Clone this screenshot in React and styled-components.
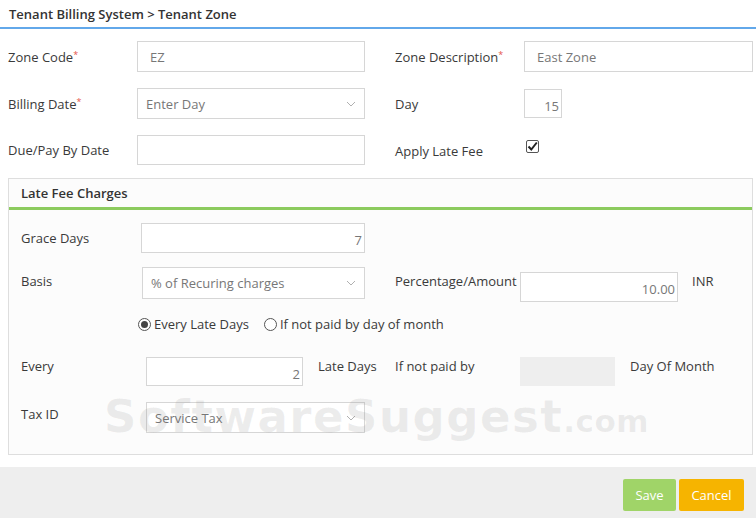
import React from "react";
import styled, { createGlobalStyle } from "styled-components";

const GlobalStyle = createGlobalStyle`
  body {
    margin: 0;
    background: #ffffff;
    font-family: "Open Sans", "Liberation Sans", sans-serif;
    font-size: 13px;
    color: #3a3a3a;
  }
`;

const Page = styled.div`
  position: relative;
  width: 756px;
  height: 518px;
  overflow: hidden;
  display: flex;
  flex-direction: column;
`;

const Header = styled.div`
  height: 27px;
  padding-left: 9px;
  display: flex;
  align-items: center;
  font-weight: 600;
  font-size: 13px;
  color: #333;
  border-bottom: 2px solid #62a8ea;
  box-sizing: content-box;
`;

const Form = styled.div`
  padding: 12px 3px 0 8px;
  display: flex;
  flex-direction: column;
  gap: 16px;
`;

const Row = styled.div`
  display: flex;
  align-items: ${(p) => (p.top ? "flex-start" : "center")};
  min-height: ${(p) => p.h || 31}px;
  margin-top: ${(p) => p.mt || 0}px;
`;

const Half = styled.div`
  display: flex;
  align-items: ${(p) => (p.top ? "flex-start" : "center")};
  width: ${(p) => p.w}px;
  margin-left: ${(p) => p.ml || 0}px;
  flex: ${(p) => (p.grow ? 1 : "none")};
`;

const Label = styled.div`
  width: ${(p) => p.w || 129}px;
  flex: none;
  color: #3a3a3a;
  padding-top: ${(p) => p.pt || 0}px;
  line-height: 18px;
  white-space: nowrap;
`;

const Req = styled.sup`
  color: #e5534b;
  font-size: 9px;
  vertical-align: top;
  position: relative;
  top: -2px;
`;

const Input = styled.div`
  box-sizing: border-box;
  height: ${(p) => p.h || 31}px;
  width: ${(p) => (p.w ? `${p.w}px` : "auto")};
  flex: ${(p) => (p.w ? "none" : 1)};
  margin-top: ${(p) => p.mt || 0}px;
  border: 1px solid #d6d6d6;
  background: ${(p) => (p.disabled ? "#eeeeee" : "#ffffff")};
  border-color: ${(p) => (p.disabled ? "#eeeeee" : "#d6d6d6")};
  color: #777;
  display: flex;
  align-items: center;
  justify-content: ${(p) => (p.right ? "flex-end" : "flex-start")};
  padding: ${(p) => (p.right ? "4px 2px 0 0" : "0 0 0 12px")};
`;

const Select = styled.div`
  box-sizing: border-box;
  height: ${(p) => p.h || 31}px;
  flex: 1;
  border: 1px solid #d6d6d6;
  background: #fff;
  color: #777;
  display: flex;
  align-items: center;
  justify-content: space-between;
  padding: 0 8px 0 8px;
`;

const Chevron = () => (
  <svg width="10" height="6" viewBox="0 0 10 6">
    <polyline points="1,1 5,5 9,1" fill="none" stroke="#b0b0b0" strokeWidth="1" />
  </svg>
);

const CheckBox = styled.span`
  width: 13px;
  height: 13px;
  box-sizing: border-box;
  border: 1px solid #555;
  border-radius: 2px;
  background: #fff;
  display: inline-flex;
  align-items: center;
  justify-content: center;
  margin: -7px 0 0 2px;
`;

const Panel = styled.div`
  margin: 13px 3px 0 8px;
  border: 1px solid #dedede;
  background: #fcfcfc;
  height: 277px;
  box-sizing: border-box;
`;

const PanelTitle = styled.div`
  height: 28px;
  padding-left: 12px;
  display: flex;
  align-items: center;
  font-weight: 600;
  color: #333;
  border-bottom: 3px solid #8ccb5e;
`;

const PanelBody = styled.div`
  padding: 13px 0 0 12px;
  display: flex;
  flex-direction: column;
`;

const Side = styled.span`
  padding-top: ${(p) => p.pt || 0}px;
  margin-left: ${(p) => p.ml || 0}px;
  line-height: 18px;
  white-space: nowrap;
`;

const Radios = styled.div`
  display: flex;
  align-items: center;
  padding-left: 117px;
  margin: 13px 0 24px;
  gap: 15px;
`;

const RadioItem = styled.label`
  display: flex;
  align-items: center;
  gap: 3px;
`;

const Dot = styled.span`
  width: 13px;
  height: 13px;
  box-sizing: border-box;
  border-radius: 50%;
  border: 1px solid #555;
  background: #fff;
  display: inline-flex;
  align-items: center;
  justify-content: center;

  &::after {
    content: "";
    width: 7px;
    height: 7px;
    border-radius: 50%;
    background: ${(p) => (p.on ? "#444" : "transparent")};
  }
`;

const Footer = styled.div`
  margin-top: 12px;
  flex: 1;
  background: #eeeeee;
  display: flex;
  justify-content: flex-end;
  align-items: flex-start;
  padding: 12px 12px 0 0;
  gap: 3px;
`;

const Button = styled.button`
  height: 32px;
  width: ${(p) => p.w}px;
  border: none;
  border-radius: 2px;
  background: ${(p) => p.bg};
  color: #fff;
  font-family: "Open Sans", "Liberation Sans", sans-serif;
  font-size: 13px;
  padding: 0;
`;

const Watermark = styled.div`
  position: absolute;
  left: 104px;
  top: 394px;
  font-family: "DejaVu Sans", "Liberation Sans", sans-serif;
  font-weight: 700;
  font-size: 45px;
  line-height: 45px;
  letter-spacing: 1.5px;
  color: rgba(110, 110, 110, 0.12);
  pointer-events: none;
  white-space: nowrap;

  span {
    font-size: 31px;
    letter-spacing: 0.5px;
  }
`;

export default function App() {
  return (
    <Page>
      <GlobalStyle />
      <Header>Tenant Billing System &gt; Tenant Zone</Header>
      <Form>
        <Row>
          <Half w={357}>
            <Label>
              Zone Code<Req>*</Req>
            </Label>
            <Input>EZ</Input>
          </Half>
          <Half grow ml={30}>
            <Label>
              Zone Description<Req>*</Req>
            </Label>
            <Input>East Zone</Input>
          </Half>
        </Row>
        <Row>
          <Half w={357}>
            <Label>
              Billing Date<Req>*</Req>
            </Label>
            <Select>
              Enter Day
              <Chevron />
            </Select>
          </Half>
          <Half grow ml={30}>
            <Label>Day</Label>
            <Input w={38} h={29} right>
              15
            </Input>
          </Half>
        </Row>
        <Row h={30}>
          <Half w={357}>
            <Label>Due/Pay By Date</Label>
            <Input h={30} />
          </Half>
          <Half grow ml={30}>
            <Label pt={2}>Apply Late Fee</Label>
            <CheckBox>
              <svg width="11" height="11" viewBox="0 0 11 11">
                <polyline
                  points="1.5,5.5 4.3,8.5 9.8,1.5"
                  fill="none"
                  stroke="#222"
                  strokeWidth="2"
                />
              </svg>
            </CheckBox>
          </Half>
        </Row>
      </Form>

      <Panel>
        <PanelTitle>Late Fee Charges</PanelTitle>
        <PanelBody>
          <Row top h={30}>
            <Half w={344} top>
              <Label w={120} pt={6}>
                Grace Days
              </Label>
              <Input h={30} right>
                7
              </Input>
            </Half>
          </Row>
          <Row top h={32} mt={14}>
            <Half w={344} top>
              <Label w={121} pt={5}>
                Basis
              </Label>
              <Select h={32}>
                % of Recuring charges
                <Chevron />
              </Select>
            </Half>
            <Half grow ml={30} top>
              <Label w={125} pt={5}>
                Percentage/Amount
              </Label>
              <Input w={158} h={30} mt={5} right>
                10.00
              </Input>
              <Side ml={14} pt={5}>
                INR
              </Side>
            </Half>
          </Row>
          <Radios>
            <RadioItem>
              <Dot on />
              Every Late Days
            </RadioItem>
            <RadioItem>
              <Dot />
              If not paid by day of month
            </RadioItem>
          </Radios>
          <Row top h={29}>
            <Half w={344} top>
              <Label w={125}>Every</Label>
              <Input w={157} h={29} right>
                2
              </Input>
              <Side ml={15}>Late Days</Side>
            </Half>
            <Half grow ml={30} top>
              <Label w={125}>If not paid by</Label>
              <Input w={95} h={29} disabled />
              <Side ml={15}>Day Of Month</Side>
            </Half>
          </Row>
          <Row top h={31} mt={16}>
            <Half w={344} top>
              <Label w={125} pt={3}>
                Tax ID
              </Label>
              <Select>
                Service Tax
                <Chevron />
              </Select>
            </Half>
          </Row>
        </PanelBody>
      </Panel>

      <Footer>
        <Button w={53} bg="#a0d468">
          Save
        </Button>
        <Button w={65} bg="#f6b400">
          Cancel
        </Button>
      </Footer>

      <Watermark>
        SoftwareSuggest<span>.com</span>
      </Watermark>
    </Page>
  );
}
